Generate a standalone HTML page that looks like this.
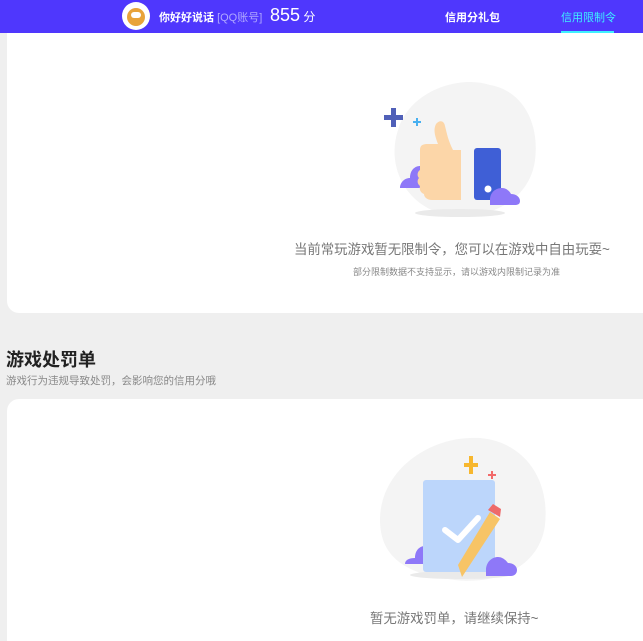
<!DOCTYPE html>
<html><head><meta charset="utf-8"><style>
*{margin:0;padding:0;box-sizing:border-box}
html,body{width:643px;height:641px;overflow:hidden}
body{background:#efefef;font-family:"Liberation Sans","Noto Sans CJK SC",sans-serif;position:relative}
.hdr{position:absolute;left:0;top:0;width:643px;height:33px;background:#4f37fd;color:#fff}
.card{position:absolute;left:7px;background:#fff;width:636px}
.t{position:absolute;white-space:nowrap}
</style></head><body>
<div class="card" style="top:0;height:313px;border-radius:0 0 0 12px"></div>
<div class="card" style="top:399px;height:242px;border-radius:12px 0 0 0"></div>
<div class="hdr">
 <div style="position:absolute;left:122px;top:2px;width:28px;height:28px;border-radius:50%;background:#fff;overflow:hidden">
  <div style="position:absolute;left:5px;top:6px;width:18px;height:18px;border-radius:50%;background:#e8a33a"></div>
  <div style="position:absolute;left:9px;top:10px;width:10px;height:6px;background:#fff;border-radius:3px"></div>
 </div>
 <div class="t" style="left:159px;top:9px;font-size:11px;font-weight:bold">你好好说话 <span style="color:#b0a8ff;font-weight:normal">[QQ账号]</span></div>
 <div class="t" style="left:270px;top:5px;font-size:18px">855<span style="font-size:12px"> 分</span></div>
 <div class="t" style="left:445px;top:9px;font-size:11px;font-weight:bold">信用分礼包</div>
 <div class="t" style="left:561px;top:9px;font-size:11px;color:#3ef0ff">信用限制令</div>
 <div style="position:absolute;left:561px;top:31px;width:53px;height:2px;background:#3ef0ff"></div>
</div>
<svg style="position:absolute;left:370px;top:60px" width="180" height="170">
 <path d="M28 70 C40 30 90 15 120 25 C150 30 170 60 165 100 C160 140 120 160 80 155 C40 150 15 110 28 70Z" fill="#f4f4f4"/>
 <ellipse cx="90" cy="153" rx="45" ry="4" fill="#eaeaea"/>
 <path d="M26 54h7v-7h5v7h7v5h-7v7h-5v-7h-7z" fill="#5060b8" transform="translate(-12 1)"/>
 <path d="M43 61h3v-3h2v3h3v2h-3v3h-2v-3h-3z" fill="#48b0f0"/>
 <path d="M40 118c0-8 5-12 10-12s8 4 8 8v14H30c0-5 4-10 10-10z" fill="#8e78f8"/>
 <path d="M50 90c0-5 3-6 8-6h10c-3-8-5-14-2-20 3-4 8-4 9 2 2 8 3 14 8 24h8v50H62c-5 0-8-3-8-6-3-1-5-4-4-8-3-2-3-6-1-8-2-2-2-6 1-8z" fill="#fcd6a8"/>
 <rect x="104" y="88" width="27" height="52" rx="3" fill="#3f5fd6"/>
 <circle cx="118" cy="129" r="3.5" fill="#fff"/>
 <path d="M120 140c0-8 6-12 12-12s9 6 9 6c5 0 9 3 9 7 0 3-2 4-5 4h-25z" fill="#8e78f8"/>
</svg>
<div class="t" style="left:294px;top:238px;font-size:13.4px;color:#777">当前常玩游戏暂无限制令，您可以在游戏中自由玩耍~</div>
<div class="t" style="left:353px;top:265px;font-size:9px;color:#888">部分限制数据不支持显示，请以游戏内限制记录为准</div>
<div class="t" style="left:6px;top:346px;font-size:18px;font-weight:bold;color:#222">游戏处罚单</div>
<div class="t" style="left:6px;top:373px;font-size:10.5px;color:#888">游戏行为违规导致处罚，会影响您的信用分哦</div>
<svg style="position:absolute;left:360px;top:430px" width="200" height="160">
 <path d="M20 90 C20 40 70 5 120 8 C165 12 190 50 185 95 C180 135 140 155 95 150 C50 145 20 130 20 90Z" fill="#f4f4f4"/>
 <ellipse cx="100" cy="145" rx="50" ry="4" fill="#eaeaea"/>
 <path d="M108 35h5v-7h4v7h5v4h-5v7h-4v-7h-5z" fill="#f7b72e" transform="translate(-4 -2)"/>
 <path d="M128 44h3v-3h2v3h3v2h-3v3h-2v-3h-3z" fill="#f26a6a"/>
 <path d="M55 128c0-8 5-12 10-12s8 4 8 8v10H45c0-4 4-6 10-6z" fill="#8e78f8"/>
 <rect x="63" y="50" width="72" height="92" rx="3" fill="#bcd6fb"/>
 <path d="M85 100l13 10 20-22" stroke="#fff" stroke-width="6" fill="none" stroke-linecap="round" stroke-linejoin="round"/>
 <path d="M130 82l10 7-38 58-4-12z" fill="#f7c466"/>
 <path d="M128 80l5-6 8 5-1 8z" fill="#ee6a6a"/>
 <path d="M126 140c0-8 6-13 12-13s10 6 10 6c5 0 9 3 9 7 0 4-3 6-6 6h-25z" fill="#8e78f8"/>
</svg>
<div class="t" style="left:370px;top:607px;font-size:13.4px;color:#777">暂无游戏罚单，请继续保持~</div>
</body></html>
